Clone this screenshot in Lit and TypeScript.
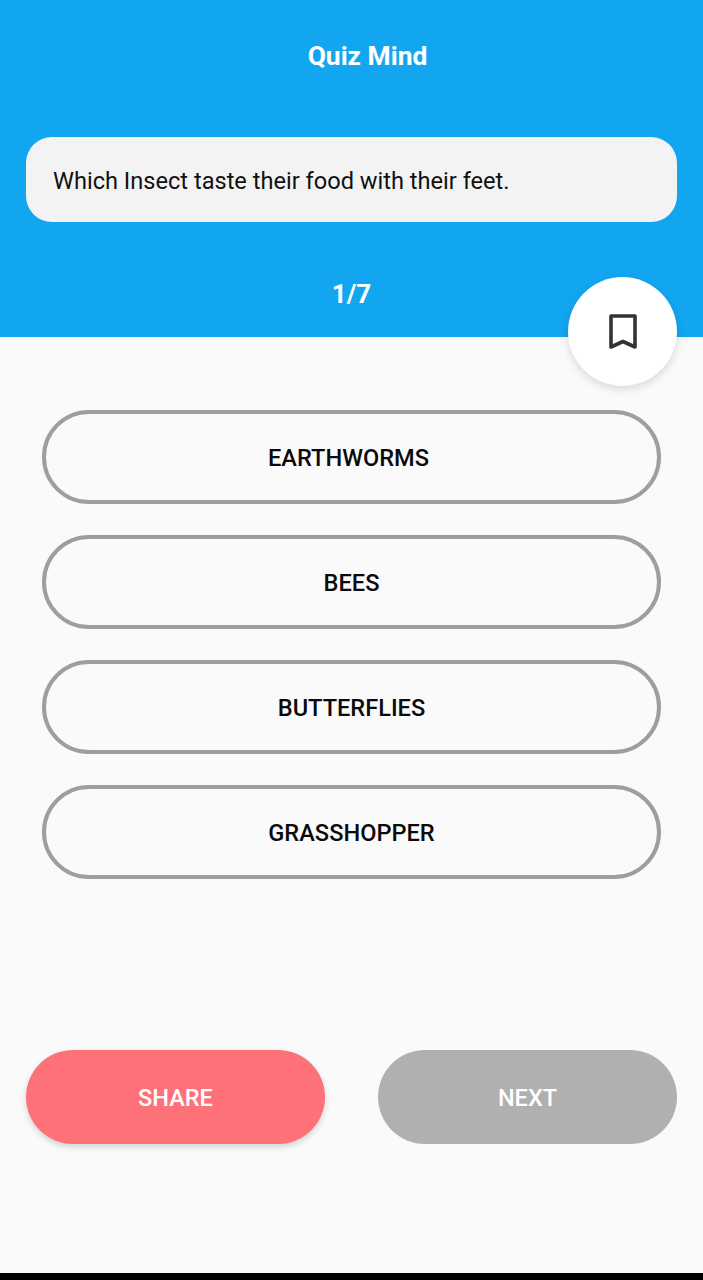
import { LitElement, html, css } from 'lit';
import { customElement } from 'lit/decorators.js';

const ANSWERS = [
  { label: 'EARTHWORMS', shift: -3 },
  { label: 'BEES', shift: 0 },
  { label: 'BUTTERFLIES', shift: 0 },
  { label: 'GRASSHOPPER', shift: 0 },
];

@customElement('app-root')
export class AppRoot extends LitElement {
  static styles = css`
    :host {
      display: flex;
      flex-direction: column;
      width: 703px;
      height: 1280px;
      background: #fafafa;
      font-family: Roboto, 'Liberation Sans', sans-serif;
      overflow: hidden;
    }
    .head {
      position: relative;
      height: 337px;
      box-sizing: border-box;
      background: #13a6f0;
      padding-top: 41px;
      display: flex;
      flex-direction: column;
    }
    .title {
      text-align: center;
      color: #fff;
      font-size: 26.4px;
      font-weight: 700;
      line-height: 30px;
      padding-left: 32px;
    }
    .question {
      margin: 66px 26px 0;
      height: 85px;
      border-radius: 26px;
      background: #f3f3f3;
      display: flex;
      align-items: center;
      padding: 3px 0 0 27px;
      box-sizing: border-box;
      font-size: 23.6px;
      color: #111;
    }
    .count {
      margin-top: 57px;
      text-align: center;
      color: #fff;
      font-size: 26px;
      font-weight: 700;
      line-height: 30px;
    }
    .bookmark {
      position: absolute;
      left: 568px;
      top: 277px;
      width: 109px;
      height: 109px;
      border-radius: 50%;
      background: #fff;
      box-shadow: 0 3px 10px rgba(0, 0, 0, 0.14);
      display: flex;
      align-items: center;
      justify-content: center;
    }
    .answers {
      display: flex;
      flex-direction: column;
      gap: 31px;
      margin: 73px 42px 0;
    }
    .answer {
      height: 94px;
      box-sizing: border-box;
      padding-top: 2px;
      border: 4px solid #9e9e9e;
      border-radius: 47px;
      display: flex;
      align-items: center;
      justify-content: center;
      font-size: 23.6px;
      font-weight: 500;
      color: #0a0a0a;
    }
    .actions {
      display: flex;
      justify-content: space-between;
      margin: 171px 26px 0;
    }
    .btn {
      width: 299px;
      height: 94px;
      box-sizing: border-box;
      padding-top: 2px;
      border-radius: 47px;
      display: flex;
      align-items: center;
      justify-content: center;
      color: #fff;
      font-size: 23.5px;
      font-weight: 500;
    }
    .share {
      background: #ff7179;
      box-shadow: 0 3px 6px rgba(0, 0, 0, 0.16);
    }
    .next {
      background: #b0b0b0;
    }
    .navbar {
      margin-top: auto;
      height: 7px;
      background: #000;
    }
  `;

  render() {
    return html`
      <div class="head">
        <div class="title">Quiz Mind</div>
        <div class="question">Which Insect taste their food with their feet.</div>
        <div class="count">1/7</div>
        <div class="bookmark">
          <svg width="34" height="40" viewBox="0 0 34 40" fill="none">
            <path d="M5 4 H29 V35 L17 29.5 L5 35 Z" stroke="#333" stroke-width="3.6" stroke-linejoin="round"/>
          </svg>
        </div>
      </div>
      <div class="answers">
        ${ANSWERS.map(a => html`<div class="answer"><span style="transform: translateX(${a.shift}px)">${a.label}</span></div>`)}
      </div>
      <div class="actions">
        <div class="btn share">SHARE</div>
        <div class="btn next">NEXT</div>
      </div>
      <div class="navbar"></div>
    `;
  }
}
